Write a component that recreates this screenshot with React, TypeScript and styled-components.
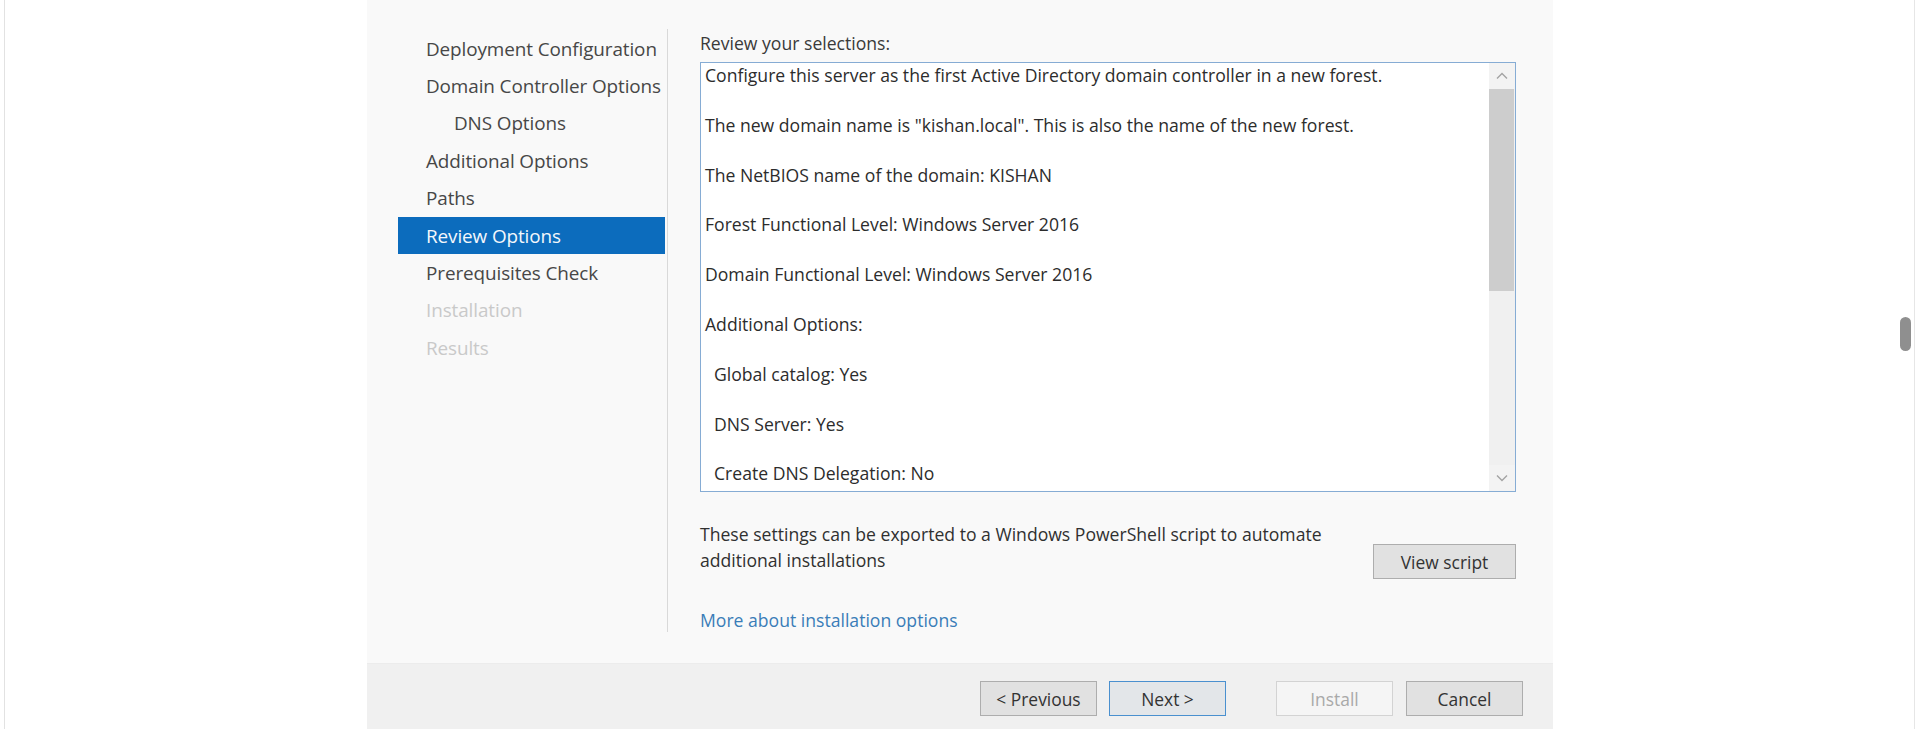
import React from "react";
import styled, { createGlobalStyle } from "styled-components";

const GlobalStyle = createGlobalStyle`
  html, body {
    margin: 0;
    padding: 0;
    background: #ffffff;
  }
  body {
    font-family: "Open Sans", "Noto Sans", sans-serif;
    color: #333333;
  }
`;

const Page = styled.div`
  position: relative;
  width: 1920px;
  height: 729px;
  padding-left: 4px;
  box-sizing: border-box;
  overflow: hidden;
`;

const Frame = styled.div`
  width: 1911px;
  height: 729px;
  box-sizing: border-box;
  border-left: 1px solid #e2e2e2;
  border-right: 1px solid #e6e6e6;
  padding-left: 362px;
`;

const PageScrollThumb = styled.div`
  position: absolute;
  left: 1900px;
  top: 317px;
  width: 11px;
  height: 34px;
  border-radius: 6px;
  background: #8f8f8f;
`;

const Dialog = styled.div`
  width: 1186px;
  height: 729px;
  background: #f9f9f9;
  display: flex;
  flex-direction: column;
`;

const Body = styled.div`
  height: 663px;
  flex-shrink: 0;
  box-sizing: border-box;
  display: flex;
  padding-top: 29px;
  padding-bottom: 31px;
  overflow: hidden;
`;

const Nav = styled.ul`
  list-style: none;
  margin: 0;
  padding: 1px 0 0 31px;
  border-right: 1px solid #d9d9d9;
  box-sizing: border-box;
  width: 301px;
`;

const NavItem = styled.li<{ $selected?: boolean; $disabled?: boolean; $indent?: boolean }>`
  height: 37.4px;
  width: 267px;
  display: flex;
  align-items: center;
  box-sizing: border-box;
  padding-left: ${(p) => (p.$indent ? 56 : 28)}px;
  font-size: 18.9px;
  letter-spacing: -0.1px;
  white-space: nowrap;
  background: ${(p) => (p.$selected ? "#0c6cbd" : "transparent")};
  color: ${(p) => (p.$selected ? "#f4f7fb" : p.$disabled ? "#c9c9c9" : "#474747")};
`;

const Content = styled.div`
  flex: 1;
  padding: 2px 37px 0 32px;
  display: flex;
  flex-direction: column;
`;

const Label = styled.div`
  font-size: 17.6px;
  line-height: 24px;
  color: #3a3a3a;
  height: 31px;
`;

const Review = styled.div`
  height: 430px;
  flex-shrink: 0;
  box-sizing: border-box;
  border: 1px solid #86acd4;
  background: #ffffff;
  display: flex;
`;

const ReviewText = styled.div`
  flex: 1;
  padding-left: 4px;
  overflow: hidden;
  font-size: 17.6px;
  line-height: 24.9px;
  color: #2c2c2c;
`;

const Para = styled.p<{ $indent?: boolean }>`
  margin: 0 0 24.9px 0;
  padding-left: ${(p) => (p.$indent ? 9 : 0)}px;
  white-space: nowrap;
`;

const ScrollBar = styled.div`
  width: 26px;
  display: flex;
  flex-direction: column;
  background: #f0f0f0;
`;

const ScrollArrow = styled.div`
  height: 26px;
  display: flex;
  align-items: center;
  justify-content: center;
  background: #f3f3f3;
`;

const ScrollTrack = styled.div`
  flex: 1;
`;

const ScrollThumb = styled.div`
  height: 202px;
  margin: 0 1px 0 0;
  background: #cdcdcd;
`;

const ExportRow = styled.div`
  margin-top: 29px;
  display: flex;
  align-items: flex-end;
  justify-content: space-between;
`;

const ExportText = styled.div`
  font-size: 17.6px;
  line-height: 26px;
  color: #303030;
`;

const Button = styled.button<{ $primary?: boolean }>`
  font-family: "Open Sans", "Noto Sans", sans-serif;
  font-size: 17.4px;
  height: 35px;
  width: 117px;
  box-sizing: border-box;
  border: 1px solid ${(p) => (p.$primary ? "#4a90cf" : "#adadad")};
  background: ${(p) => (p.$primary ? "#e3e6e9" : "#e1e1e1")};
  color: #333333;
  padding: 0;
  &:disabled {
    border-color: #d3d3d3;
    background: #f5f5f5;
    color: #a9a9a9;
  }
`;

const ViewScript = styled(Button)`
  width: 143px;
  height: 35px;
  margin-bottom: -6px;
`;

const Link = styled.a`
  margin-top: 35px;
  align-self: flex-start;
  font-size: 17.6px;
  line-height: 24px;
  color: #3a7db8;
  text-decoration: none;
`;

const Footer = styled.div`
  height: 66px;
  flex-shrink: 0;
  background: #f0f0f0;
  border-top: 1px solid #ececec;
  box-sizing: border-box;
  display: flex;
  justify-content: flex-end;
  align-items: flex-start;
  padding: 17px 30px 0 0;
`;

const ButtonGroup = styled.div<{ $gap: number }>`
  display: flex;
  gap: ${(p) => p.$gap}px;
  margin-left: ${(p) => p.$gap}px;
`;

const navItems = [
  { label: "Deployment Configuration" },
  { label: "Domain Controller Options" },
  { label: "DNS Options", indent: true },
  { label: "Additional Options" },
  { label: "Paths" },
  { label: "Review Options", selected: true },
  { label: "Prerequisites Check" },
  { label: "Installation", disabled: true },
  { label: "Results", disabled: true },
];

const lines = [
  { text: "Configure this server as the first Active Directory domain controller in a new forest." },
  { text: 'The new domain name is "kishan.local". This is also the name of the new forest.' },
  { text: "The NetBIOS name of the domain: KISHAN" },
  { text: "Forest Functional Level: Windows Server 2016" },
  { text: "Domain Functional Level: Windows Server 2016" },
  { text: "Additional Options:" },
  { text: "Global catalog: Yes", indent: true },
  { text: "DNS Server: Yes", indent: true },
  { text: "Create DNS Delegation: No", indent: true },
];

function Chevron({ up }: { up?: boolean }) {
  return (
    <svg width="12" height="8" viewBox="0 0 12 8">
      <path
        d={up ? "M1 6.5 L6 1.5 L11 6.5" : "M1 1.5 L6 6.5 L11 1.5"}
        fill="none"
        stroke="#a3a3a3"
        strokeWidth="1.4"
      />
    </svg>
  );
}

export default function App() {
  return (
    <Page>
      <GlobalStyle />
      <Frame>
        <Dialog>
          <Body>
            <Nav>
              {navItems.map((item) => (
                <NavItem key={item.label} $selected={item.selected} $disabled={item.disabled} $indent={item.indent}>
                  {item.label}
                </NavItem>
              ))}
            </Nav>
            <Content>
              <Label>Review your selections:</Label>
              <Review>
                <ReviewText>
                  {lines.map((l) => (
                    <Para key={l.text} $indent={l.indent}>
                      {l.text}
                    </Para>
                  ))}
                </ReviewText>
                <ScrollBar>
                  <ScrollArrow>
                    <Chevron up />
                  </ScrollArrow>
                  <ScrollTrack>
                    <ScrollThumb />
                  </ScrollTrack>
                  <ScrollArrow>
                    <Chevron />
                  </ScrollArrow>
                </ScrollBar>
              </Review>
              <ExportRow>
                <ExportText>
                  These settings can be exported to a Windows PowerShell script to automate
                  <br />
                  additional installations
                </ExportText>
                <ViewScript>View script</ViewScript>
              </ExportRow>
              <Link href="#">More about installation options</Link>
            </Content>
          </Body>
          <Footer>
            <ButtonGroup $gap={12}>
              <Button>&lt; Previous</Button>
              <Button $primary>Next &gt;</Button>
            </ButtonGroup>
            <ButtonGroup $gap={50}>
              <Button disabled>Install</Button>
            </ButtonGroup>
            <ButtonGroup $gap={13}>
              <Button>Cancel</Button>
            </ButtonGroup>
          </Footer>
        </Dialog>
      </Frame>
      <PageScrollThumb />
    </Page>
  );
}
